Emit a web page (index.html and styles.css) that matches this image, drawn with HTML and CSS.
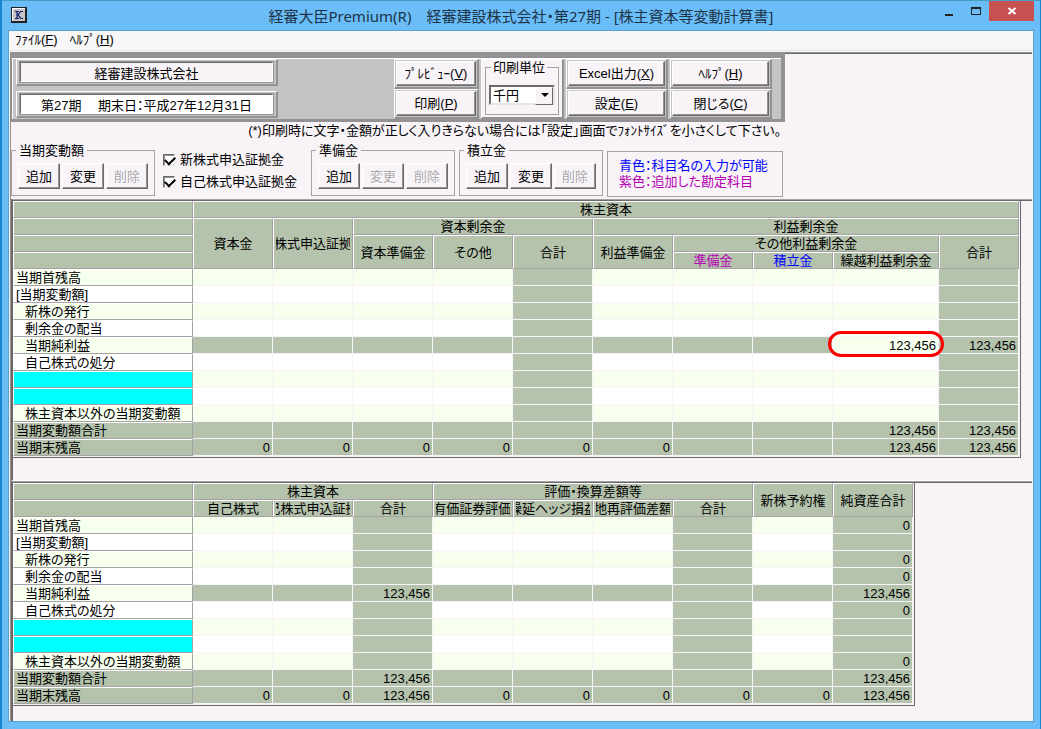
FILE: index.html
```html
<!DOCTYPE html>
<html lang="ja">
<head>
<meta charset="utf-8">
<title>経審大臣Premium(R) - 株主資本等変動計算書</title>
<link rel="stylesheet" href="styles.css">
</head>
<body>
<div class="window">
  <header class="titlebar">
    <svg class="app-icon" width="16" height="16" viewBox="0 0 16 16" aria-hidden="true">
      <rect width="16" height="16" fill="#222"/>
      <rect x="1" y="1" width="13" height="13" fill="#fff"/>
      <rect x="2" y="2" width="12" height="12" fill="#c6c3c6"/>
      <path d="M4 4.500h4M6 4.500v7M4 11.500h4M12 4.500h-2.500L7 8l3 3.500h2" fill="none" stroke="#10206b" stroke-width="1.200"/>
    </svg>
    <h1 class="title">経審大臣Premium(R)&emsp;経審建設株式会社・第27期 - [株主資本等変動計算書]</h1>
    <div class="window-buttons">
      <button class="win-btn" type="button" aria-label="最小化"><svg width="10" height="10" viewBox="0 0 10 10"><path d="M1 8h8v2H1z" fill="#222"/></svg></button>
      <button class="win-btn" type="button" aria-label="最大化"><svg width="10" height="10" viewBox="0 0 10 10"><path d="M0 1h10v8H0zM1 3v5h8V3z" fill="#222" fill-rule="evenodd"/></svg></button>
      <button class="win-btn close" type="button" aria-label="閉じる"><svg width="10" height="10" viewBox="0 0 10 10"><path d="M1.500 2l7 6M8.500 2l-7 6" stroke="#fff" stroke-width="2"/></svg></button>
    </div>
  </header>

  <div class="client">
    <nav class="menu">
      <button type="button">ﾌｧｲﾙ(<u>F</u>)</button>
      <button type="button">ﾍﾙﾌﾟ(<u>H</u>)</button>
    </nav>

    <main class="content">
      <div class="toolbar">
        <div class="fields">
          <div class="bevel"><input class="field name" aria-label="会社名" value="経審建設株式会社" readonly></div>
          <div class="bevel"><input class="field" aria-label="会計期間" value="第27期　 期末日：平成27年12月31日" readonly></div>
        </div>
        <div class="stack print">
          <div class="bevel"><button class="push" type="button">ﾌﾟﾚﾋﾞｭｰ(<u>V</u>)</button></div>
          <div class="bevel"><button class="push" type="button">印刷(<u>P</u>)</button></div>
        </div>
        <div class="bevel unit">
          <fieldset class="group">
            <legend><label for="unit">印刷単位</label></legend>
            <span class="combo"><select id="unit"><option>千円</option></select></span>
          </fieldset>
        </div>
        <div class="stack">
          <div class="bevel"><button class="push" type="button">Excel出力(<u>X</u>)</button></div>
          <div class="bevel"><button class="push" type="button">設定(<u>E</u>)</button></div>
        </div>
        <div class="stack">
          <div class="bevel"><button class="push" type="button">ﾍﾙﾌﾟ(<u>H</u>)</button></div>
          <div class="bevel"><button class="push" type="button">閉じる(<u>C</u>)</button></div>
        </div>
      </div>

      <p class="note">(*)印刷時に文字・金額が正しく入りきらない場合には「設定」画面でﾌｫﾝﾄｻｲｽﾞを小さくして下さい。</p>

      <div class="actions">
        <fieldset class="group edit">
          <legend>当期変動額</legend>
          <button type="button">追加</button><button type="button">変更</button><button type="button" disabled>削除</button>
        </fieldset>
        <div class="checks">
          <label><input type="checkbox" checked>新株式申込証拠金</label>
          <label><input type="checkbox" checked>自己株式申込証拠金</label>
        </div>
        <fieldset class="group edit">
          <legend>準備金</legend>
          <button type="button">追加</button><button type="button" disabled>変更</button><button type="button" disabled>削除</button>
        </fieldset>
        <fieldset class="group edit">
          <legend>積立金</legend>
          <button type="button">追加</button><button type="button">変更</button><button type="button" disabled>削除</button>
        </fieldset>
        <div class="hint">
          <p class="blue">青色：科目名の入力が可能</p>
          <p class="purple">紫色：追加した勘定科目</p>
        </div>
      </div>

      <section class="pane upper">
        <table class="sheet capital">
          <colgroup><col class="label"><col span="8"><col class="wide"><col></colgroup>
          <thead>
            <tr><th></th><th colspan="10">株主資本</th></tr>
            <tr><th></th><th rowspan="3">資本金</th><th rowspan="3"><span class="clip">新株式申込証拠金</span></th><th colspan="3">資本剰余金</th><th colspan="5">利益剰余金</th></tr>
            <tr><th></th><th rowspan="2">資本準備金</th><th rowspan="2">その他</th><th rowspan="2">合計</th><th rowspan="2">利益準備金</th><th colspan="3">その他利益剰余金</th><th rowspan="2">合計</th></tr>
            <tr><th></th><th class="purple">準備金</th><th class="blue">積立金</th><th>繰越利益剰余金</th></tr>
          </thead>
          <tbody>
            <tr><th scope="row">当期首残高</th><td></td><td></td><td></td><td></td><td></td><td></td><td></td><td></td><td></td><td></td></tr>
            <tr><th scope="row">[当期変動額]</th><td></td><td></td><td></td><td></td><td></td><td></td><td></td><td></td><td></td><td></td></tr>
            <tr><th scope="row" class="sub">新株の発行</th><td></td><td></td><td></td><td></td><td></td><td></td><td></td><td></td><td></td><td></td></tr>
            <tr><th scope="row" class="sub">剰余金の配当</th><td></td><td></td><td></td><td></td><td></td><td></td><td></td><td></td><td></td><td></td></tr>
            <tr class="auto"><th scope="row" class="sub">当期純利益</th><td></td><td></td><td></td><td></td><td></td><td></td><td></td><td></td><td class="entry">123,456<span class="ring"></span></td><td>123,456</td></tr>
            <tr><th scope="row" class="sub">自己株式の処分</th><td></td><td></td><td></td><td></td><td></td><td></td><td></td><td></td><td></td><td></td></tr>
            <tr><th scope="row" class="free"></th><td></td><td></td><td></td><td></td><td></td><td></td><td></td><td></td><td></td><td></td></tr>
            <tr><th scope="row" class="free"></th><td></td><td></td><td></td><td></td><td></td><td></td><td></td><td></td><td></td><td></td></tr>
            <tr><th scope="row" class="sub">株主資本以外の当期変動額</th><td></td><td></td><td></td><td></td><td></td><td></td><td></td><td></td><td></td><td></td></tr>
            <tr class="auto total"><th scope="row">当期変動額合計</th><td></td><td></td><td></td><td></td><td></td><td></td><td></td><td></td><td>123,456</td><td>123,456</td></tr>
            <tr class="auto total"><th scope="row">当期末残高</th><td>0</td><td>0</td><td>0</td><td>0</td><td>0</td><td>0</td><td></td><td></td><td>123,456</td><td>123,456</td></tr>
          </tbody>
        </table>
      </section>

      <section class="pane lower">
        <table class="sheet net-assets">
          <colgroup><col class="label"><col span="9"></colgroup>
          <thead>
            <tr><th></th><th colspan="3">株主資本</th><th colspan="4">評価・換算差額等</th><th rowspan="2">新株予約権</th><th rowspan="2">純資産合計</th></tr>
            <tr><th></th><th>自己株式</th><th><span class="clip">自己株式申込証拠金</span></th><th>合計</th><th><span class="clip">その他有価証券評価差額金</span></th><th><span class="clip">繰延ヘッジ損益</span></th><th><span class="clip">土地再評価差額金</span></th><th>合計</th></tr>
          </thead>
          <tbody>
            <tr><th scope="row">当期首残高</th><td></td><td></td><td></td><td></td><td></td><td></td><td></td><td></td><td>0</td></tr>
            <tr><th scope="row">[当期変動額]</th><td></td><td></td><td></td><td></td><td></td><td></td><td></td><td></td><td></td></tr>
            <tr><th scope="row" class="sub">新株の発行</th><td></td><td></td><td></td><td></td><td></td><td></td><td></td><td></td><td>0</td></tr>
            <tr><th scope="row" class="sub">剰余金の配当</th><td></td><td></td><td></td><td></td><td></td><td></td><td></td><td></td><td>0</td></tr>
            <tr class="auto"><th scope="row" class="sub">当期純利益</th><td></td><td></td><td>123,456</td><td></td><td></td><td></td><td></td><td></td><td>123,456</td></tr>
            <tr><th scope="row" class="sub">自己株式の処分</th><td></td><td></td><td></td><td></td><td></td><td></td><td></td><td></td><td>0</td></tr>
            <tr><th scope="row" class="free"></th><td></td><td></td><td></td><td></td><td></td><td></td><td></td><td></td><td></td></tr>
            <tr><th scope="row" class="free"></th><td></td><td></td><td></td><td></td><td></td><td></td><td></td><td></td><td></td></tr>
            <tr><th scope="row" class="sub">株主資本以外の当期変動額</th><td></td><td></td><td></td><td></td><td></td><td></td><td></td><td></td><td>0</td></tr>
            <tr class="auto total"><th scope="row">当期変動額合計</th><td></td><td></td><td>123,456</td><td></td><td></td><td></td><td></td><td></td><td>123,456</td></tr>
            <tr class="auto total"><th scope="row">当期末残高</th><td>0</td><td>0</td><td>123,456</td><td>0</td><td>0</td><td>0</td><td>0</td><td>0</td><td>123,456</td></tr>
          </tbody>
        </table>
      </section>
    </main>
  </div>
</div>
</body>
</html>
```
FILE: styles.css
```css
:root {
  --face: #f7f3f7;
  --frame: #6bbdf7;
  --shadow: #949194;
  --dark: #6b696b;
  --line: #a5a2a5;
  --panel: #c6c3c6;
  --sage: #b5c3ad;
  --mint: #f7ffef;
}

* { box-sizing: border-box; }

body {
  margin: 0;
  background: #1686ce;
  color: #000;
  font: 13px/15px "Liberation Sans", "Noto Sans CJK JP", sans-serif;
  font-feature-settings: "palt";
}

p, h1, fieldset { margin: 0; }

button, input, select {
  font: inherit;
  font-feature-settings: inherit;
  color: inherit;
}

/* Window frame */
.window {
  display: flex;
  flex-direction: column;
  min-height: 100vh;
  margin: 0 1px 0 2px;
  padding: 0 6px 7px;
  background: var(--frame);
  border-top: 1px solid #4a9bc4;
}

.titlebar {
  display: grid;
  grid-template-columns: 1fr auto 1fr;
  align-items: start;
  height: 29px;
}

.app-icon { margin: 6px 0 0 3px; }

.title {
  padding-top: 4px;
  color: #1c3448;
  font: 15px/22px "Noto Sans", "Noto Sans CJK JP", sans-serif;
  font-feature-settings: "palt";
}

.window-buttons {
  display: flex;
  justify-content: flex-end;
}

.win-btn {
  width: 27px;
  height: 20px;
  padding: 0;
  border: 0;
  background: none;
}

.win-btn svg { display: block; margin: 0 auto; }
.win-btn.close { width: 45px; background: #c75050; }

.client {
  display: flex;
  flex: 1;
  flex-direction: column;
  border: 1px solid #5aa2cc;
  background: var(--face);
}

.menu {
  display: flex;
  gap: 12px;
  padding: 0 6px 1px;
  background: #f7f7f7;
  border-bottom: 1px solid #e7e7e7;
}

.menu button {
  padding: 0;
  border: 0;
  background: none;
  line-height: 18px;
}

.content {
  display: flex;
  flex: 1;
  flex-direction: column;
  margin: 1px 1px 0;
  border: 1px solid var(--shadow);
  border-width: 1px 0 0 1px;
  box-shadow: inset 0 1px var(--dark);
}

/* Toolbar */
.toolbar {
  display: flex;
  gap: 2px;
  width: 774px;
  padding-right: 9px;
  background: var(--panel);
  border: solid var(--shadow);
  border-width: 5px 4px 3px 1px;
  box-shadow: inset 1px 1px #fff;
}

.fields {
  display: grid;
  align-content: start;
  gap: 5px;
  width: 380px;
  padding: 1px 0 0 4px;
}

.fields .bevel {
  width: 262px;
  padding: 2px 3px;
}

.bevel {
  padding: 1px;
  background: var(--panel);
  border: solid;
  border-color: #fff var(--shadow) var(--shadow) #fff;
  border-width: 1px 2px 2px 1px;
}

.field {
  display: block;
  width: 100%;
  height: 20px;
  padding: 0;
  border: 1px solid;
  border-color: var(--dark) #fff #fff var(--dark);
  border-radius: 0;
  background: #fff;
  box-shadow: 0 0 0 1px var(--shadow);
  text-align: center;
}

.field.name { background: var(--face); }

.stack {
  display: grid;
  width: 102px;
  padding-top: 1px;
}

.stack.print { width: 85px; }

.push, .edit button {
  background: var(--face);
  border: 1px solid;
  border-color: #fff var(--dark) var(--dark) #fff;
  box-shadow: inset -1px -1px var(--shadow);
}

.push {
  display: block;
  width: 100%;
  padding: 0;
  line-height: 23px;
}

.unit { width: 83px; background: var(--face); margin-top: 1px; padding: 0 3px 2px; }

.group {
  min-width: 0;
  padding: 0;
  border: 1px solid var(--line);
}

.group legend { margin-left: 4px; padding: 0 3px; }

.unit .group { height: 55px; padding: 0 3px; }
.unit legend { margin-left: 2px; padding: 0 2px; }

.combo {
  position: relative;
  display: block;
  margin-top: 10px;
}

.combo select {
  display: block;
  width: 100%;
  height: 20px;
  padding: 0 2px;
  appearance: none;
  border: 2px solid;
  border-color: var(--dark) #e7e3e7 #e7e3e7 var(--dark);
  border-radius: 0;
  background: #fff;
}

.combo::before {
  content: "";
  position: absolute;
  top: 2px;
  right: 2px;
  width: 16px;
  height: 16px;
  background: var(--face);
  border: 1px solid;
  border-color: #fff var(--dark) var(--dark) #fff;
  pointer-events: none;
}

.combo::after {
  content: "";
  position: absolute;
  top: 8px;
  right: 6px;
  border: solid transparent;
  border-width: 4px 4px 0;
  border-top-color: #000;
  pointer-events: none;
}

.note {
  width: 774px;
  padding: 1px 4px 0 0;
  text-align: right;
  white-space: nowrap;
}

/* Action row */
.actions {
  display: flex;
  gap: 4px;
  padding: 5px 0 2px;
}

.edit {
  display: flex;
  gap: 2px;
  width: 144px;
  height: 53px;
  padding: 5px 6px 0;
}

.edit legend { margin-left: -2px; }

.edit button {
  flex: 1;
  height: 26px;
  padding: 0;
}

.edit button:disabled { color: #aaa6aa; text-shadow: 1px 1px #fff; }

.checks {
  display: grid;
  align-content: start;
  gap: 5px;
  width: 148px;
  padding: 8px 0 0 4px;
}

.checks label { display: flex; align-items: center; gap: 5px; line-height: 17px; white-space: nowrap; }

.checks input {
  width: 12px;
  height: 12px;
  margin: 0;
  appearance: none;
  border: 1px solid;
  border-color: var(--dark) #e7e3e7 #e7e3e7 var(--dark);
  background: #fff;
  box-shadow: inset 1px 1px var(--shadow);
}

.checks input:checked::before {
  content: "";
  display: block;
  width: 8px;
  height: 5px;
  margin: 1px 0 0 1px;
  border: solid #000;
  border-width: 0 0 2px 2px;
  transform: rotate(-45deg);
}

.hint {
  width: 176px;
  margin-top: 8px;
  padding: 6px 11px;
  border: 1px solid var(--line);
  line-height: 16px;
  white-space: nowrap;
}

.blue { color: #00f; }
.purple { color: #b500b5; }

/* Sheets */
.pane {
  border-top: 1px solid var(--line);
  border-left: 2px solid var(--dark);
  box-shadow: inset 0 1px var(--dark);
  padding-top: 1px;
}

.upper { padding-bottom: 22px; border-bottom: 1px solid #fff; }
.lower { flex: 1; }

.sheet {
  table-layout: fixed;
  width: 0;
  padding: 0 1px 1px 0;
  border-spacing: 0;
  border: solid var(--dark);
  border-width: 0 1px 1px 0;
}

.sheet col { width: 80px; }
.sheet .label { width: 180px; }
.sheet .wide { width: 106px; }

.sheet th {
  height: 17px;
  padding: 0;
  background: var(--sage);
  border: 1px solid;
  border-color: #fff var(--line) var(--line) #fff;
  font-weight: 400;
  white-space: nowrap;
}

.sheet tbody th {
  padding-left: 2px;
  background: #fff;
  text-align: left;
}

.sheet tbody .sub { padding-left: 11px; }

.sheet td {
  position: relative;
  height: 17px;
  padding: 1px 2px 0 0;
  background: #fff;
  border: solid var(--face);
  border-width: 0 1px 1px 0;
  text-align: right;
}

.sheet tbody tr:nth-child(odd) > * { background: var(--mint); }
.sheet tbody tr > .free:first-child { background: #0ff; }

.capital tbody tr > td:nth-child(6),
.capital tbody tr > td:nth-child(11),
.net-assets tbody tr > td:nth-child(4),
.net-assets tbody tr > td:nth-child(8),
.net-assets tbody tr > td:nth-child(10),
.sheet tbody .auto > td,
.sheet tbody .total > th { background: var(--sage); }

.sheet tbody .auto:nth-child(5) > .entry { background: var(--mint); }
.sheet tbody tr.total:nth-child(odd) > * { background: var(--sage); }

.clip {
  display: flex;
  justify-content: center;
  margin: 0 2px;
  overflow: hidden;
}

.ring {
  position: absolute;
  inset: -6px -6px -4px -5px;
  z-index: 1;
  border: 3px solid #f00;
  border-radius: 13px;
}
```
